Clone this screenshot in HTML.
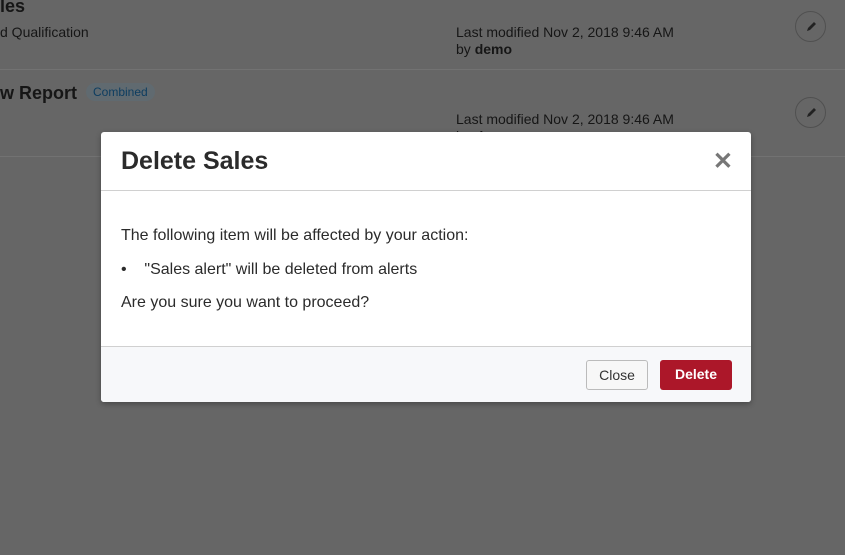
<!DOCTYPE html>
<html><head><style>
body{margin:0;width:845px;height:555px;background:#666;font-family:"Liberation Sans",sans-serif;position:relative;overflow:hidden;color:#333}
.t{position:absolute;color:#161616;white-space:nowrap}
.sep{position:absolute;left:0;width:845px;height:1px;background:#727272}
.ed{position:absolute;left:795px;width:31px;height:31px;border:1px solid #505050;border-radius:50%;box-sizing:border-box}
.ed svg{position:absolute;left:8px;top:8px}
.modal{position:absolute;left:101px;top:132px;width:650px;height:270px;background:#fff;border-radius:3px;box-shadow:0 2px 6px rgba(0,0,0,.3);overflow:hidden}
.hd{height:58px;border-bottom:1px solid #d0d0d0;position:relative}
.hd h1{margin:0;position:absolute;left:20px;top:15px;font-size:25px;font-weight:bold;color:#2b2b2b}
.x{position:absolute;right:18px;top:15px;font-size:24px;font-weight:bold;color:#777}
.bd{height:155px;border-bottom:1px solid #d0d0d0;position:relative;font-size:16px;color:#2b2b2b}
.bd div{position:absolute;left:20px}
.ft{background:#f7f8fa;height:56px;position:relative}
.b{position:absolute;top:13px;height:30px;box-sizing:border-box;border-radius:3px;font-size:14px;line-height:28px;text-align:center}
</style></head><body>
<div class="t" style="left:0;top:-4px;font-size:18px;font-weight:bold">les</div>
<div class="t" style="left:0;top:24px;font-size:14px">d Qualification</div>
<div class="t" style="left:456px;top:24px;font-size:14px">Last modified Nov 2, 2018 9:46 AM</div>
<div class="t" style="left:456px;top:41px;font-size:14px">by <b>demo</b></div>
<div class="ed" style="top:11px"><svg width="14" height="14" viewBox="0 0 14 14"><path d="M3 11 L4 8 L10 2 L12 4 L6 10 Z" fill="#222"/></svg></div>
<div class="sep" style="top:69px"></div>
<div class="t" style="left:0;top:83px;font-size:18px;font-weight:bold">w Report</div>
<div class="t" style="left:86px;top:83px;font-size:12px;background:#606a70;color:#0d3d60;padding:2px 7px;border-radius:9px">Combined</div>
<div class="t" style="left:456px;top:111px;font-size:14px">Last modified Nov 2, 2018 9:46 AM</div>
<div class="t" style="left:456px;top:128px;font-size:14px">by <b>demo</b></div>
<div class="ed" style="top:97px"><svg width="14" height="14" viewBox="0 0 14 14"><path d="M3 11 L4 8 L10 2 L12 4 L6 10 Z" fill="#222"/></svg></div>
<div class="sep" style="top:156px"></div>
<div class="modal">
<div class="hd"><h1>Delete Sales</h1><div class="x">✕</div></div>
<div class="bd">
<div style="top:36px">The following item will be affected by your action:</div>
<div style="top:70px">•&nbsp;&nbsp;&nbsp;&nbsp;"Sales alert" will be deleted from alerts</div>
<div style="top:103px">Are you sure you want to proceed?</div>
</div>
<div class="ft">
<div class="b" style="left:485px;width:62px;border:1px solid #bbb;background:#f7f7f7;color:#333">Close</div>
<div class="b" style="left:559px;width:72px;background:#ac1729;color:#fff;font-weight:bold">Delete</div>
</div>
</div>
</body></html>
